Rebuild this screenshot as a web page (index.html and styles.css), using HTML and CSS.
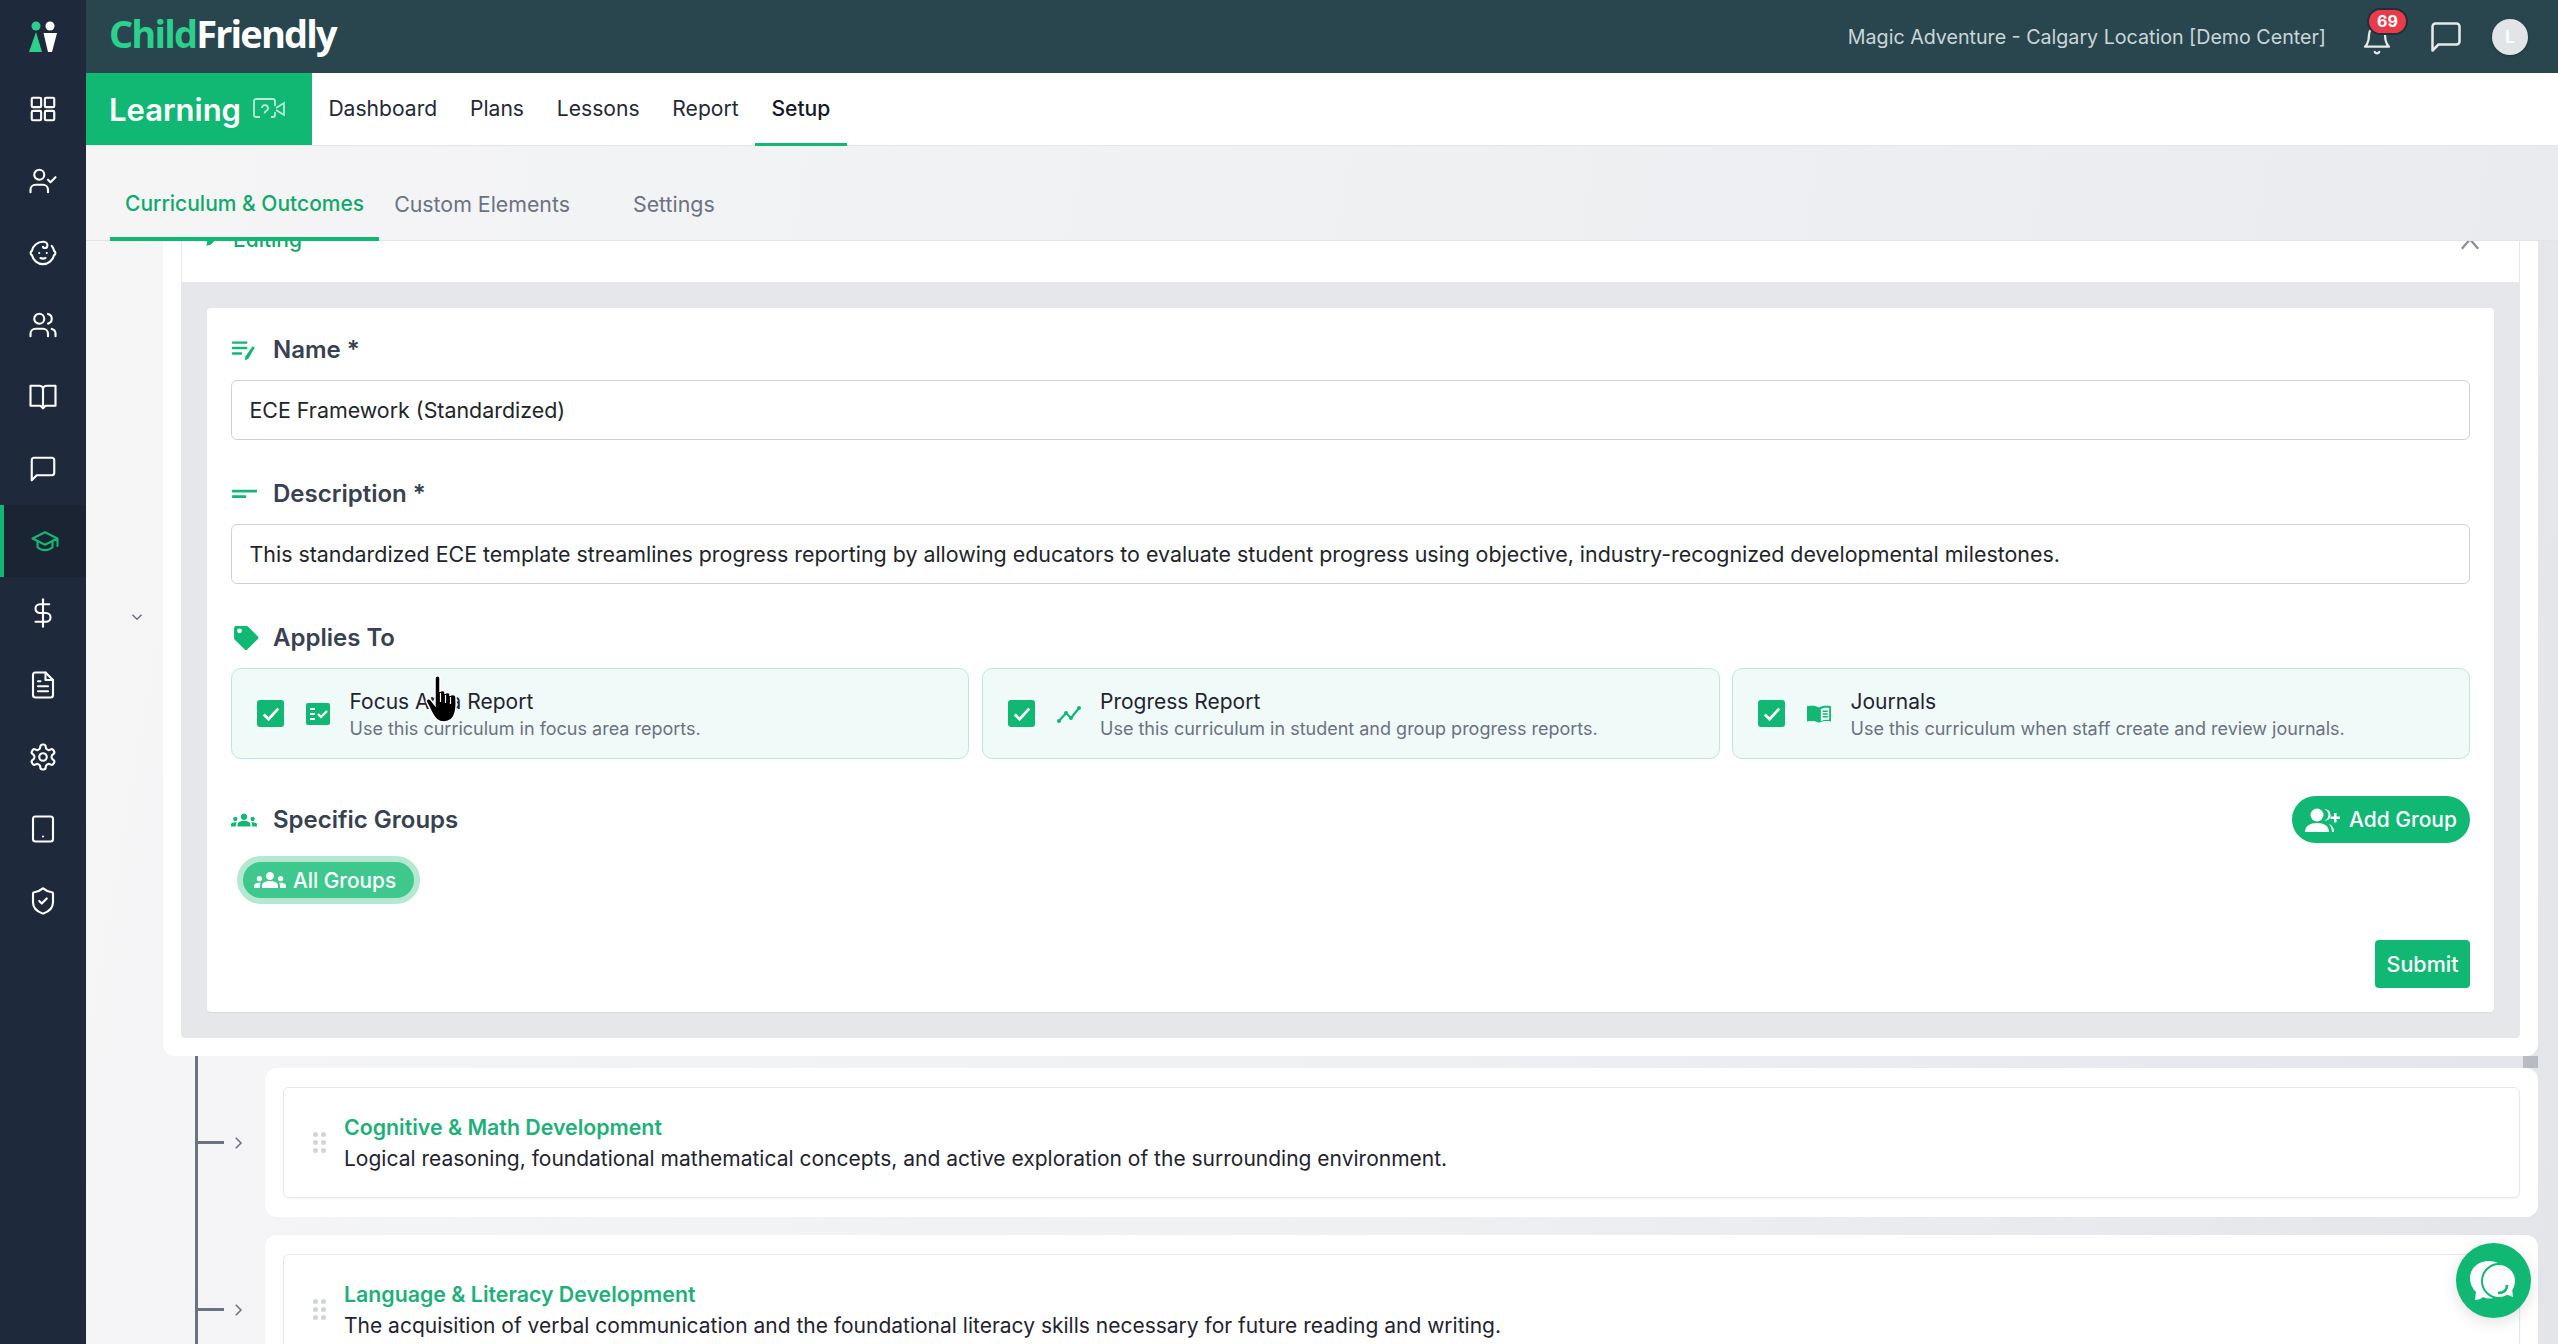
FILE: index.html

```html
<!DOCTYPE html>
<html lang="en">
<head>
    <meta charset="UTF-8">
    <meta name="viewport" content="width=device-width, initial-scale=1.0">
    <title>ChildFriendly - Learning Setup</title>
    <link rel="stylesheet" href="styles.css">
</head>
<body>
    <svg class="sprite" xmlns="http://www.w3.org/2000/svg">
        <symbol id="i-grid" viewBox="0 0 24 24"><rect x="3" y="3" width="7.5" height="7.5" rx="1"/><rect x="13.5" y="3" width="7.5" height="7.5" rx="1"/><rect x="13.5" y="13.5" width="7.5" height="7.5" rx="1"/><rect x="3" y="13.5" width="7.5" height="7.5" rx="1"/></symbol>
        <symbol id="i-user-check" viewBox="0 0 24 24"><path d="M16 21v-2a4 4 0 0 0-4-4H6a4 4 0 0 0-4 4v2"/><circle cx="9" cy="7" r="4"/><polyline points="16 11 18 13 22 9"/></symbol>
        <symbol id="i-baby" viewBox="0 0 24 24"><path d="M9 12h.01M15 12h.01M10 16c.5.3 1.2.5 2 .5s1.5-.2 2-.5"/><path d="M19 6.3a9 9 0 0 1 1.8 3.9 2 2 0 0 1 0 3.6 9 9 0 0 1-17.6 0 2 2 0 0 1 0-3.6A9 9 0 0 1 12 3c2 0 3.5 1.1 3.5 2.5s-.9 2.5-2 2.5c-.8 0-1.5-.4-1.5-1"/></symbol>
        <symbol id="i-users" viewBox="0 0 24 24"><path d="M16 21v-2a4 4 0 0 0-4-4H6a4 4 0 0 0-4 4v2"/><circle cx="9" cy="7" r="4"/><path d="M22 21v-2a4 4 0 0 0-3-3.87"/><path d="M16 3.13a4 4 0 0 1 0 7.75"/></symbol>
        <symbol id="i-book" viewBox="0 0 24 24"><path d="M2 3h7c1.5 0 3 1 3 2.5C12 4 13.5 3 15 3h7v16h-8l-2 2-2-2H2z"/><path d="M12 5.5V19"/></symbol>
        <symbol id="i-message" viewBox="0 0 24 24"><path d="M21 15a2 2 0 0 1-2 2H7l-4 4V5a2 2 0 0 1 2-2h14a2 2 0 0 1 2 2z"/></symbol>
        <symbol id="i-cap" viewBox="0 0 24 24"><path d="M22 10v6M2 10l10-5 10 5-10 5z"/><path d="M6 12v5c3 3 9 3 12 0v-5"/></symbol>
        <symbol id="i-dollar" viewBox="0 0 24 24"><path d="M12 1v22"/><path d="M17 5H9.5a3.5 3.5 0 0 0 0 7h5a3.5 3.5 0 0 1 0 7H6"/></symbol>
        <symbol id="i-file" viewBox="0 0 24 24"><path d="M14 2H6a2 2 0 0 0-2 2v16a2 2 0 0 0 2 2h12a2 2 0 0 0 2-2V8z"/><path d="M14 2v6h6M16 13H8M16 17H8M10 9H8"/></symbol>
        <symbol id="i-gear" viewBox="0 0 24 24"><path d="M12.22 2h-.44a2 2 0 0 0-2 2v.18a2 2 0 0 1-1 1.73l-.43.25a2 2 0 0 1-2 0l-.15-.08a2 2 0 0 0-2.73.73l-.22.38a2 2 0 0 0 .73 2.73l.15.1a2 2 0 0 1 1 1.72v.51a2 2 0 0 1-1 1.74l-.15.09a2 2 0 0 0-.73 2.73l.22.38a2 2 0 0 0 2.73.73l.15-.08a2 2 0 0 1 2 0l.43.25a2 2 0 0 1 1 1.73V20a2 2 0 0 0 2 2h.44a2 2 0 0 0 2-2v-.18a2 2 0 0 1 1-1.73l.43-.25a2 2 0 0 1 2 0l.15.08a2 2 0 0 0 2.73-.73l.22-.39a2 2 0 0 0-.73-2.73l-.15-.08a2 2 0 0 1-1-1.74v-.5a2 2 0 0 1 1-1.74l.15-.09a2 2 0 0 0 .73-2.73l-.22-.38a2 2 0 0 0-2.73-.73l-.15.08a2 2 0 0 1-2 0l-.43-.25a2 2 0 0 1-1-1.73V4a2 2 0 0 0-2-2z"/><circle cx="12" cy="12" r="3"/></symbol>
        <symbol id="i-tablet" viewBox="0 0 24 24"><rect x="4" y="2" width="16" height="20" rx="2"/><path d="M12 18h.01"/></symbol>
        <symbol id="i-shield" viewBox="0 0 24 24"><path d="M20 13c0 5-3.5 7.5-7.66 8.95a1 1 0 0 1-.67-.01C7.5 20.5 4 18 4 13V6a1 1 0 0 1 1-1c2 0 4.5-1.2 6.24-2.72a1.17 1.17 0 0 1 1.52 0C14.51 3.81 17 5 19 5a1 1 0 0 1 1 1z"/><path d="m9 12 2 2 4-4"/></symbol>
        <symbol id="i-groups" viewBox="0 0 24 24"><path d="M12 12.75c1.63 0 3.07.39 4.24.9 1.08.48 1.76 1.56 1.76 2.73V18H6v-1.61c0-1.18.68-2.26 1.76-2.73 1.17-.52 2.61-.91 4.24-.91zM4 13c1.1 0 2-.9 2-2s-.9-2-2-2-2 .9-2 2 .9 2 2 2zm1.13 1.1C4.76 14.04 4.39 14 4 14c-.99 0-1.93.21-2.78.58C.48 14.9 0 15.62 0 16.43V18h4.5v-1.61c0-.83.23-1.61.63-2.29zM20 13c1.1 0 2-.9 2-2s-.9-2-2-2-2 .9-2 2 .9 2 2 2zm4 3.43c0-.81-.48-1.53-1.22-1.85-.85-.37-1.79-.58-2.78-.58-.39 0-.76.04-1.13.1.4.68.63 1.46.63 2.29V18H24v-1.57zM12 6c1.66 0 3 1.34 3 3s-1.34 3-3 3-3-1.34-3-3 1.34-3 3-3z"/></symbol>
    </svg>

    <div class="app">
        <aside class="sidebar">
            <div class="side-logo">
                <svg width="30" height="32" viewBox="0 0 30 32">
                    <circle cx="8" cy="5" r="4.5" fill="#2bd08c"/>
                    <circle cx="22" cy="5" r="4.5" fill="#fff"/>
                    <path d="M8 11 L14 31 H1 Z" fill="#2bd08c"/>
                    <path d="M15.5 12 H29 L24 31 H20 Z" fill="#fff"/>
                </svg>
            </div>
            <a class="side-item"><svg class="line-icon"><use href="#i-grid"/></svg></a>
            <a class="side-item"><svg class="line-icon"><use href="#i-user-check"/></svg></a>
            <a class="side-item"><svg class="line-icon"><use href="#i-baby"/></svg></a>
            <a class="side-item"><svg class="line-icon"><use href="#i-users"/></svg></a>
            <a class="side-item"><svg class="line-icon"><use href="#i-book"/></svg></a>
            <a class="side-item"><svg class="line-icon"><use href="#i-message"/></svg></a>
            <a class="side-item active"><svg class="line-icon"><use href="#i-cap"/></svg></a>
            <a class="side-item"><svg class="line-icon"><use href="#i-dollar"/></svg></a>
            <a class="side-item"><svg class="line-icon"><use href="#i-file"/></svg></a>
            <a class="side-item"><svg class="line-icon"><use href="#i-gear"/></svg></a>
            <a class="side-item"><svg class="line-icon"><use href="#i-tablet"/></svg></a>
            <a class="side-item"><svg class="line-icon"><use href="#i-shield"/></svg></a>
        </aside>

        <div class="main">
            <header class="topbar">
                <div class="brand"><span class="brand-green">Child</span>Friendly</div>
                <div class="topbar-right">
                    <span class="center-name">Magic Adventure - Calgary Location [Demo Center]</span>
                    <div class="bell">
                        <svg class="line-icon bell-icon" viewBox="0 0 24 24"><path d="M6 8a6 6 0 0 1 12 0c0 7 3 9 3 9H3s3-2 3-9"/><path d="M10.3 21a1.94 1.94 0 0 0 3.4 0"/></svg>
                        <span class="badge">69</span>
                    </div>
                    <svg class="line-icon top-chat"><use href="#i-message"/></svg>
                    <span class="avatar">L</span>
                </div>
            </header>

            <nav class="navbar">
                <div class="module">
                    Learning
                    <svg class="module-icon" viewBox="0 0 34 24"><path d="M23 9V4a2 2 0 0 0-2-2H4a2 2 0 0 0-2 2v14a2 2 0 0 0 2 2h4"/><path d="M23 15v3a2 2 0 0 1-2 2h-2"/><path d="M24 11l8-5v12l-8-5"/><path d="M10 11a3 3 0 1 1 4 3c-1 .5-1.5 1-1.5 2.5M12.5 20.5h.01"/></svg>
                </div>
                <a class="nav-link">Dashboard</a>
                <a class="nav-link">Plans</a>
                <a class="nav-link">Lessons</a>
                <a class="nav-link">Report</a>
                <a class="nav-link current">Setup</a>
            </nav>

            <div class="content">
                <div class="tabs">
                    <a class="tab selected">Curriculum &amp; Outcomes</a>
                    <a class="tab">Custom Elements</a>
                    <a class="tab">Settings</a>
                </div>

                <div class="scroll-area">
                    <div class="panel-row">
                        <div class="panel-toggle">
                            <svg class="small-chevron" viewBox="0 0 24 24"><path d="m6 9 6 6 6-6"/></svg>
                        </div>
                        <section class="panel">
                            <div class="panel-head">
                                <span class="editing">
                                    <svg width="18" height="18" viewBox="0 0 24 24" fill="#10b874"><path d="M3 21l1.5-6L16 3.5l4.5 4.5L9 19.5z"/></svg>
                                    Editing
                                </span>
                                <svg class="up-chevron" viewBox="0 0 24 24"><path d="m5 16 7-8 7 8"/></svg>
                            </div>

                            <div class="panel-body">
                                <form class="form-card">
                                    <div class="field-label">
                                        <svg class="label-icon" viewBox="0 0 24 24" fill="#10b874"><path d="M1 5h14v2.2H1zM1 10h14v2.2H1zM1 15h9v2.2H1z"/><path d="M20 9.5l2 1.2-6 10.3-3 1.5.1-3.3z"/></svg>
                                        Name *
                                    </div>
                                    <div class="text-input">ECE Framework (Standardized)</div>

                                    <div class="field-label spaced">
                                        <svg class="label-icon" viewBox="0 0 24 24" fill="#10b874"><path d="M1 9h23v2.6H1zM1 14h13v2.6H1z"/></svg>
                                        Description *
                                    </div>
                                    <div class="text-input">This standardized ECE template streamlines progress reporting by allowing educators to evaluate student progress using objective, industry-recognized developmental milestones.</div>

                                    <div class="field-label spaced">
                                        <svg class="label-icon tag-icon" viewBox="0 0 24 24" fill="#10b874"><path d="M12.4 1.8H3a2 2 0 0 0-2 2v9.4a2 2 0 0 0 .6 1.4l9 8.8a2 2 0 0 0 2.8 0l9.4-9.4a2 2 0 0 0 0-2.8l-9-9a2 2 0 0 0-1.4-.4zM6 8.5a2.2 2.2 0 1 1 0-4.4 2.2 2.2 0 0 1 0 4.4z" fill-rule="evenodd"/></svg>
                                        Applies To
                                    </div>
                                    <div class="apply-grid">
                                        <div class="apply-card">
                                            <span class="check"><svg viewBox="0 0 24 24"><path d="M5 13l5 5 10-11"/></svg></span>
                                            <svg class="apply-icon" viewBox="0 0 24 22"><rect width="24" height="22" rx="2" fill="#10b874"/><path d="M4 6h5M4 11h5M4 16h5M12 11l3 3 6-6" stroke="#fff" stroke-width="2.2" fill="none"/></svg>
                                            <div class="apply-text">
                                                <div class="apply-title">Focus Area Report</div>
                                                <div class="apply-sub">Use this curriculum in focus area reports.</div>
                                            </div>
                                        </div>
                                        <div class="apply-card">
                                            <span class="check"><svg viewBox="0 0 24 24"><path d="M5 13l5 5 10-11"/></svg></span>
                                            <svg class="apply-icon" viewBox="0 0 24 22"><path d="M2 18l7-8 5 5 8-10" stroke="#10b874" stroke-width="2.2" fill="none"/><circle cx="2" cy="18" r="2" fill="#10b874"/><circle cx="9" cy="10" r="2" fill="#10b874"/><circle cx="14" cy="15" r="2" fill="#10b874"/><circle cx="22" cy="5" r="2" fill="#10b874"/></svg>
                                            <div class="apply-text">
                                                <div class="apply-title">Progress Report</div>
                                                <div class="apply-sub">Use this curriculum in student and group progress reports.</div>
                                            </div>
                                        </div>
                                        <div class="apply-card">
                                            <span class="check"><svg viewBox="0 0 24 24"><path d="M5 13l5 5 10-11"/></svg></span>
                                            <svg class="apply-icon" viewBox="0 0 26 20"><path d="M13 3C10 1 5 .5 0 1.5V18c5-1 10-.5 13 1.5z" fill="#10b874"/><path d="M13 3c3-2 8-2.5 13-1.5V18c-5-1-10-.5-13 1.5z" fill="#10b874"/><path d="M15 4.5c3-1.5 6-1.5 9-1.2v13c-3-.3-6 0-9 1.2z" fill="#f0faf7"/><path d="M17 7h5.5M17 10h5.5M17 13h5.5" stroke="#10b874" stroke-width="1.4"/></svg>
                                            <div class="apply-text">
                                                <div class="apply-title">Journals</div>
                                                <div class="apply-sub">Use this curriculum when staff create and review journals.</div>
                                            </div>
                                        </div>
                                    </div>

                                    <div class="groups-head">
                                        <div class="field-label">
                                            <svg class="label-icon" viewBox="0 0 24 24" fill="#10b874"><use href="#i-groups"/></svg>
                                            Specific Groups
                                        </div>
                                        <button type="button" class="add-group">
                                            <svg width="36" height="26" viewBox="0 0 36 26" fill="#fff"><circle cx="12" cy="8" r="6.5"/><path d="M0 25c0-6 5-9 12-9s12 3 12 9z"/><path d="M19 2c3 1 4.5 3.5 4.5 6s-1.5 5-4.5 6c5-.5 6.5-3 6.5-6S24 2.5 19 2zM24 17c2 2 3 5 3 8h2c0-4-2-7-5-8z"/><path d="M29 6h2.5v3.5H35V12h-3.5v3.5H29V12h-3.5V9.5H29z"/></svg>
                                            Add Group
                                        </button>
                                    </div>
                                    <div class="group-pill">
                                        <svg width="32" height="32" viewBox="0 0 24 24" fill="#fff"><use href="#i-groups"/></svg>
                                        All Groups
                                    </div>
                                    <div class="form-actions">
                                        <button type="button" class="submit-btn">Submit</button>
                                    </div>
                                </form>
                            </div>
                        </section>
                    </div>

                    <div class="tree">
                        <div class="panel-nub"></div>
                        <div class="tree-row">
                            <span class="connector"></span>
                            <svg class="small-chevron tree-chevron" viewBox="0 0 24 24"><path d="m9 5 7 7-7 7"/></svg>
                            <div class="domain">
                                <div class="domain-inner">
                                    <span class="drag-dots"><i></i><i></i><i></i><i></i><i></i><i></i></span>
                                    <div class="domain-text">
                                        <div class="domain-title">Cognitive &amp; Math Development</div>
                                        <div class="domain-desc">Logical reasoning, foundational mathematical concepts, and active exploration of the surrounding environment.</div>
                                    </div>
                                </div>
                            </div>
                        </div>
                        <div class="tree-row">
                            <span class="connector"></span>
                            <svg class="small-chevron tree-chevron" viewBox="0 0 24 24"><path d="m9 5 7 7-7 7"/></svg>
                            <div class="domain">
                                <div class="domain-inner">
                                    <span class="drag-dots"><i></i><i></i><i></i><i></i><i></i><i></i></span>
                                    <div class="domain-text">
                                        <div class="domain-title">Language &amp; Literacy Development</div>
                                        <div class="domain-desc">The acquisition of verbal communication and the foundational literacy skills necessary for future reading and writing.</div>
                                    </div>
                                </div>
                            </div>
                        </div>
                    </div>
                </div>
            </div>
        </div>
    </div>

    <!-- floating chat button and the recorded mouse pointer -->
    <a class="chat-fab">
        <svg width="50" height="44" viewBox="0 0 50 44">
            <path d="M20 2C9 2 1 9.5 1 19c0 6 3 11 6 14l-1 8c3 0 6-1 8-3 2 1 4 1.5 6 1.5 11 0 19-8 19-18C39 10 31 2 20 2z" fill="#fff"/>
            <circle cx="30" cy="22" r="17" fill="#fff" stroke="#10b874" stroke-width="2"/>
            <path d="M44 38l-8-3 7-6z" fill="#fff"/>
            <path d="M29 34c5 0 9-2 9-8" fill="none" stroke="#10b874" stroke-width="2.5"/>
        </svg>
    </a>
    <svg class="hand-cursor" width="36" height="49" viewBox="0 0 36 49">
        <path d="M10 3c0-3 5-3 5 0v14c0-2 5-2 5 0v2c0-2 5-2 5 0v2c0-2 6-2 6 1 0 7 1 10-1 16-1 5-5 9-11 9-7 0-9-4-12-9L2 28c-2-3 1-6 4-3l4 5z" fill="#000" stroke="#fff" stroke-width="1.5"/>
        <path d="M15.5 18v9M20.5 20v8M25.5 22v7" stroke="#fff" stroke-width="1.2" fill="none"/>
    </svg>
</body>
</html>
```

FILE: styles.css

```css
* {
    box-sizing: border-box;
}

html, body {
    margin: 0;
    height: 100%;
    overflow: hidden;
}

body {
    font-family: Inter, "Liberation Sans", Arial, sans-serif;
    font-size: 21px;
    color: #1f2937;
    background-color: #f3f4f6;
}

.sprite {
    display: none;
}

.app {
    display: flex;
    height: 1344px;
}

.line-icon {
    width: 30px;
    height: 30px;
    fill: none;
    stroke: currentColor;
    stroke-width: 1.7;
    stroke-linecap: round;
    stroke-linejoin: round;
}

/* sidebar */
.sidebar {
    width: 86px;
    flex-shrink: 0;
    background-color: #1e293b;
    color: #fff;
}

.side-logo {
    height: 73px;
    display: flex;
    align-items: center;
    justify-content: center;
}

.side-item {
    height: 72px;
    display: flex;
    align-items: center;
    justify-content: center;
    border-left: 4px solid transparent;
    padding-right: 4px;
}

.side-item.active {
    background-color: #1a2433;
    border-left-color: #10b874;
    color: #10b874;
    padding-right: 0;
}

/* top bars */
.main {
    flex: 1;
    min-width: 0;
    display: flex;
    flex-direction: column;
}

.topbar {
    height: 73px;
    flex-shrink: 0;
    background-color: #29464f;
    display: flex;
    align-items: center;
    justify-content: space-between;
    padding: 0 30px 0 23px;
}

.brand {
    font-family: "Open Sans", sans-serif;
    font-size: 38px;
    font-weight: 700;
    letter-spacing: -1.85px;
    color: #fff;
    padding-bottom: 8px;
}

.brand-green {
    color: #2bd08c;
}

.topbar-right {
    display: flex;
    align-items: center;
    color: #fff;
}

.center-name {
    font-size: 19.65px;
    color: #c9d6d8;
    margin-right: 35px;
}

.bell {
    position: relative;
    width: 32px;
    height: 40px;
    margin-right: 35px;
}

.bell-icon {
    width: 32px;
    height: 32px;
    margin-top: 7px;
    color: #e5e9ea;
}

.badge {
    position: absolute;
    top: -9px;
    left: 6px;
    min-width: 41px;
    height: 27px;
    border-radius: 14px;
    background-color: #e93b4a;
    border: 2px solid #1e2f3d;
    color: #fff;
    font-size: 16px;
    font-weight: 700;
    text-align: center;
    line-height: 23px;
}

.top-chat {
    width: 36px;
    height: 36px;
    margin-right: 28px;
    color: #e5e9ea;
}

.avatar {
    width: 36px;
    height: 36px;
    border-radius: 50%;
    background-color: #e2e5e8;
    color: #fff;
    font-size: 17px;
    font-weight: 600;
    text-align: center;
    line-height: 36px;
    box-shadow: 0 1px 3px rgba(0, 0, 0, 0.3);
}

.navbar {
    height: 73px;
    flex-shrink: 0;
    background-color: #fff;
    border-bottom: 1px solid #e3e5e8;
    display: flex;
    align-items: stretch;
}

.module {
    width: 226px;
    background-color: #10b874;
    color: #fff;
    font-size: 31px;
    font-weight: 600;
    display: flex;
    align-items: center;
    padding-left: 23px;
    gap: 11px;
}

.module-icon {
    width: 34px;
    height: 24px;
    fill: none;
    stroke: #b9ecd6;
    stroke-width: 1.8;
}

.nav-link {
    padding: 0 16.4px;
    display: flex;
    align-items: center;
    font-size: 21.1px;
    color: #1f2937;
    border-bottom: 3px solid transparent;
    margin-bottom: -1px;
}

.nav-link.current {
    color: #111827;
    font-weight: 500;
    border-bottom-color: #10b874;
}

/* page content */
.content {
    flex: 1;
    min-height: 0;
    display: flex;
    flex-direction: column;
    background: linear-gradient(100deg, #f6f6f7 0%, #eef0f2 55%, #e3e5eb 100%);
}

.tabs {
    height: 95px;
    flex-shrink: 0;
    display: flex;
    align-items: stretch;
    padding-left: 24px;
    border-bottom: 1px solid #e1e3e6;
    position: relative;
    z-index: 2;
    background: linear-gradient(100deg, #f5f5f6 0%, #eef0f2 55%, #e9ebef 100%);
}

.tab {
    display: flex;
    align-items: center;
    padding: 24px 15px 0;
    font-size: 21.33px;
    color: #6b7280;
    border-bottom: 4px solid transparent;
    margin-bottom: -1px;
}

.tab.selected {
    font-size: 21px;
    color: #10a96c;
    font-weight: 500;
    border-bottom-color: #10b874;
}

.tab:last-child {
    margin-left: 33px;
}

.scroll-area {
    flex: 1;
    min-height: 0;
    overflow: hidden;
    margin-top: -63px;
}

.panel-row {
    display: flex;
    align-items: center;
}

.panel-toggle {
    width: 77px;
    flex-shrink: 0;
    display: flex;
    justify-content: center;
    padding-left: 24px;
}

.small-chevron {
    width: 18px;
    height: 18px;
    fill: none;
    stroke: #6b7280;
    stroke-width: 2;
}

.panel {
    flex: 1;
    min-width: 0;
    margin-right: 20px;
    background-color: #fff;
    border-radius: 0 0 12px 12px;
    padding: 0 18px 18px;
}

.panel-head {
    height: 104px;
    padding: 43px 0 0 22px;
    display: flex;
    justify-content: space-between;
    border-left: 1px solid #e5e7eb;
    border-right: 1px solid #e5e7eb;
}

.editing {
    display: flex;
    align-items: center;
    gap: 11px;
    height: 36px;
    font-size: 21px;
    font-weight: 500;
    color: #10a96c;
}

.up-chevron {
    width: 28px;
    height: 28px;
    margin: 9px 35px 0 0;
    fill: none;
    stroke: #8b8f94;
    stroke-width: 2;
}

.panel-body {
    background-color: #e5e7eb;
    border-radius: 0 0 4px 4px;
    padding: 26px;
}

.form-card {
    background-color: #fff;
    border-radius: 4px;
    padding: 26px 24px 24px;
    box-shadow: 0 1px 2px rgba(0, 0, 0, 0.06);
}

.field-label {
    display: flex;
    align-items: center;
    height: 30px;
    font-size: 24px;
    font-weight: 600;
    color: #374151;
}

.field-label.spaced {
    margin-top: 38px;
}

.label-icon {
    width: 26px;
    height: 26px;
    margin-right: 16px;
    flex-shrink: 0;
}

.tag-icon {
    margin-left: 2px;
    margin-right: 14px;
}

.text-input {
    margin-top: 16px;
    height: 60px;
    border: 1.5px solid #ced1d6;
    border-radius: 6px;
    padding: 0 17.5px;
    display: flex;
    align-items: center;
    font-size: 21.4px;
    color: #212529;
}

.apply-grid {
    display: grid;
    grid-template-columns: repeat(3, 1fr);
    gap: 12.5px;
    margin-top: 16px;
}

.apply-card {
    height: 91px;
    display: flex;
    align-items: center;
    padding: 0 25px;
    background-color: #f0faf8;
    border: 1.5px solid #bfe8da;
    border-radius: 10px;
}

.check {
    width: 27px;
    height: 27px;
    flex-shrink: 0;
    background-color: #10b874;
    border-radius: 3px;
    display: flex;
    align-items: center;
    justify-content: center;
}

.check svg {
    width: 23px;
    height: 23px;
    fill: none;
    stroke: #fff;
    stroke-width: 2.8;
}

.apply-icon {
    width: 24px;
    height: 22px;
    margin: 0 19.5px 0 22px;
    flex-shrink: 0;
}

.apply-text {
    padding-top: 3px;
}

.apply-title {
    font-size: 21px;
    color: #1f2430;
    line-height: 27px;
}

.apply-sub {
    font-size: 18px;
    color: #6b7280;
    line-height: 27px;
}

.groups-head {
    display: flex;
    justify-content: space-between;
    align-items: center;
    margin-top: 37px;
    height: 47px;
}

.add-group {
    height: 47px;
    width: 178px;
    border: none;
    border-radius: 24px;
    background-color: #10b874;
    color: #fff;
    font-family: inherit;
    font-size: 21px;
    font-weight: 500;
    display: flex;
    align-items: center;
    justify-content: center;
    gap: 8px;
}

.group-pill {
    display: flex;
    align-items: center;
    gap: 7px;
    margin: 19px 0 0 12px;
    height: 36px;
    width: 171px;
    padding-left: 11px;
    border-radius: 18px;
    background-color: #3ec88e;
    box-shadow: 0 0 0 6px #b3e8d2;
    color: #fff;
    font-size: 20.8px;
    font-weight: 500;
}

.form-actions {
    display: flex;
    justify-content: flex-end;
    margin-top: 42px;
}

.submit-btn {
    width: 95px;
    height: 48px;
    border: none;
    border-radius: 4px;
    background-color: #10b874;
    color: #fff;
    font-family: inherit;
    font-size: 21.5px;
    font-weight: 500;
}

/* tree of domains below the form */
.tree {
    margin-left: 109px;
    border-left: 3px solid #6b7280;
}

.panel-nub {
    width: 15px;
    height: 12px;
    margin-left: auto;
    margin-right: 20px;
    background-color: #b8bcc2;
}

.tree-row {
    display: flex;
    align-items: center;
    margin-bottom: 18px;
}

.connector {
    width: 26px;
    height: 3px;
    flex-shrink: 0;
    background-color: #6b7280;
}

.tree-chevron {
    width: 18px;
    height: 18px;
    margin: 0 18px 0 5px;
    flex-shrink: 0;
}

.domain {
    flex: 1;
    min-width: 0;
    margin-right: 20px;
    padding: 19px 18px;
    background-color: #fff;
    border-radius: 12px;
}

.domain-inner {
    height: 111px;
    display: flex;
    align-items: center;
    padding-left: 29px;
    gap: 18px;
    border: 1px solid #e5e7eb;
    border-radius: 6px;
    box-shadow: 0 1px 2px rgba(0, 0, 0, 0.04);
}

.drag-dots {
    display: grid;
    grid-template-columns: 5px 5px;
    gap: 3px;
    flex-shrink: 0;
}

.drag-dots i {
    width: 5px;
    height: 5px;
    border-radius: 50%;
    background-color: #d1d5db;
}

.domain-title {
    font-size: 21.33px;
    font-weight: 600;
    color: #1eb07a;
    line-height: 32px;
}

.domain-desc {
    font-size: 21px;
    color: #1f2430;
    line-height: 32px;
}

/* overlays */
.chat-fab {
    position: absolute;
    left: 2456px;
    top: 1243px;
    width: 75px;
    height: 75px;
    border-radius: 50%;
    background-color: #10b874;
    display: flex;
    align-items: center;
    justify-content: center;
    box-shadow: 0 4px 16px rgba(0, 0, 0, 0.12);
}

.hand-cursor {
    position: absolute;
    left: 425px;
    top: 675px;
}
```
